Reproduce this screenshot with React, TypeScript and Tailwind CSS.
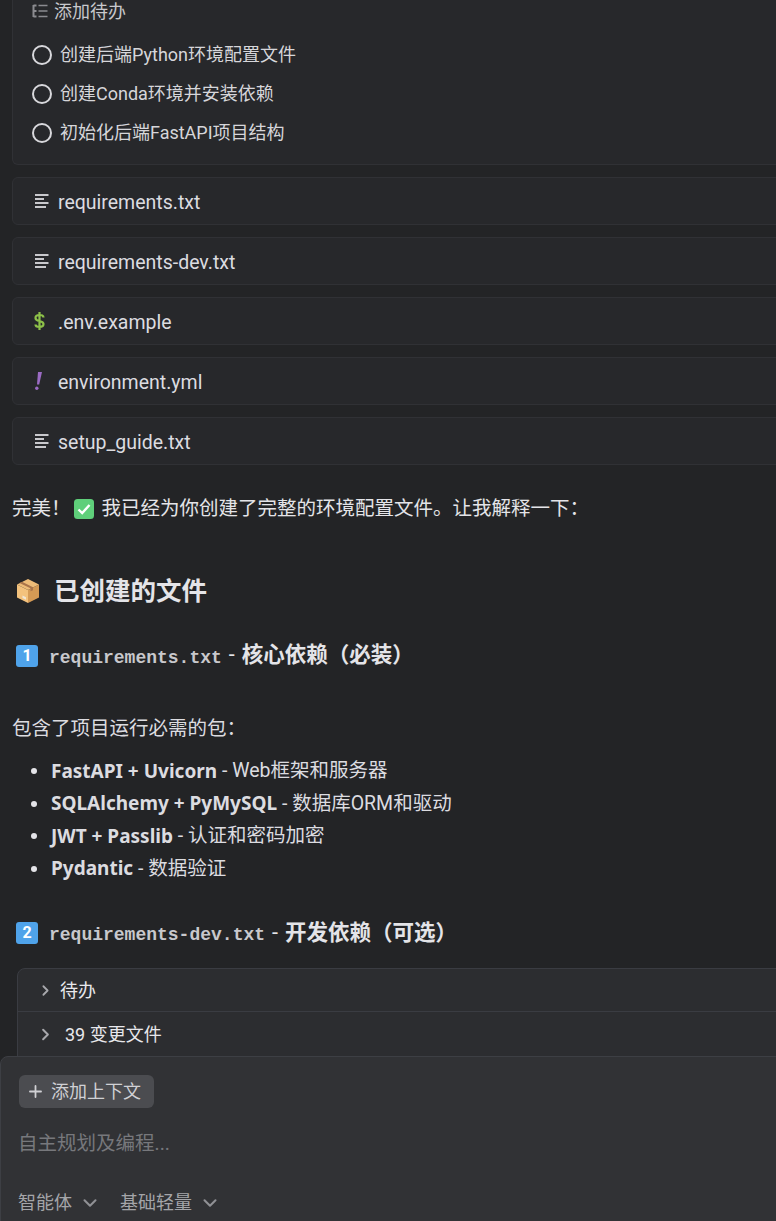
import { ChevronDown, ChevronRight, Plus } from "lucide-react";

const font = "font-['Roboto','Noto_Sans_CJK_SC',sans-serif]";

const LinesIcon = () => (
  <svg width="14" height="14" viewBox="0 0 14 14" className="text-[#c8c8cc]">
    <path d="M0 1h13.500M0 5h9M0 9h13.500M0 13h11" stroke="currentColor" strokeWidth="1.800" />
  </svg>
);

const DollarIcon = () => (
  <svg width="11" height="18" viewBox="0 0 11 18" className="-ml-[1px] text-[#8dc149]">
    <path
      d="M9.500 5.500C9.500 3.600 7.500 3 5.500 3 3.400 3 1.500 3.900 1.500 5.900 1.500 7.900 3.400 8.500 5.500 9c2.100.5 4 1.100 4 3.100 0 2-1.900 2.900-4 2.900-2 0-4-.6-4-2.500M5.500 0v18"
      stroke="currentColor"
      strokeWidth="2.200"
      fill="none"
    />
  </svg>
);

const BangIcon = () => (
  <svg width="7" height="18" viewBox="0 0 7 18" className="text-[#9b6bc4]">
    <path d="M3 0h4L4.200 12.500H2z" fill="currentColor" />
    <circle cx="1.800" cy="16.200" r="1.700" fill="currentColor" />
  </svg>
);

const TodoIcon = () => (
  <svg width="16" height="14" viewBox="0 0 16 14" className="text-[#8b8b90]">
    <path d="M1.500 1v12M1.500 1.500h3M1.500 7h3M1.500 12.500h3" stroke="currentColor" strokeWidth="2" fill="none" />
    <path d="M6.500 1.500h9M6.500 7h9M6.500 12.500h9" stroke="currentColor" strokeWidth="1.500" fill="none" />
  </svg>
);

const CheckEmoji = () => (
  <svg width="20" height="20" viewBox="0 0 20 20">
    <rect width="20" height="20" rx="3.500" fill="#5fcf7a" />
    <path d="M4.500 10.500l3.700 3.500 7.300-8" stroke="#fff" strokeWidth="2.400" fill="none" />
  </svg>
);

const BoxEmoji = () => (
  <svg width="24" height="26" viewBox="0 0 24 26">
    <path d="M1 6.500l11 5.500v13L1 19.500z" fill="#f3c27d" />
    <path d="M12 12l11-5.500v13L12 25z" fill="#d49a55" />
    <path d="M12 1l11 5.500L12 12 1 6.500z" fill="#eebc78" />
    <path d="M6 3.700l11 5.500v3l-2.500 1v-3L3.500 5z" fill="#a9744a" />
    <path d="M6.500 17.500l3.500 1.800v2.500l-3.500-1.800z" fill="#efe6d6" />
  </svg>
);

const KeyCap = ({ label }: { label: string }) => (
  <span className="flex h-[22px] w-[22px] items-center justify-center rounded-[3px] bg-[#4fa3ea] text-[16px] font-bold leading-none text-white">
    {label}
  </span>
);

const TodoRow = ({ text }: { text: string }) => (
  <div className="flex h-[39px] items-center gap-2 text-[18px] text-[#d6d6da]">
    <span className="h-5 w-5 rounded-full border-[2.500px] border-[#d8d8dc]" />
    <span>{text}</span>
  </div>
);

const FileCard = ({ icon, name }: { icon: React.ReactNode; name: string }) => (
  <div className="flex h-12 w-[800px] items-center rounded-md border border-[#303135] bg-[#27282b]">
    <span className="flex w-[45px] pl-[22px]">{icon}</span>
    <span className="pt-[4px] text-[19.500px] text-[#dcdce0]">{name}</span>
  </div>
);

const Bullet = ({ title, rest }: { title: string; rest: string }) => (
  <li className="flex h-[32.500px] items-center text-[19.500px] text-[#dcdce0]">
    <span className="mr-[14px] ml-[19px] h-[6px] w-[6px] rounded-full bg-[#e4e4e8]" />
    <span className="font-['Noto_Sans','Noto_Sans_CJK_SC',sans-serif] text-[19px] font-bold">{title}</span>
    <span>&nbsp;- {rest}</span>
  </li>
);

const App = () => {
  return (
    <div className={`relative h-[1221px] w-[776px] overflow-hidden bg-[#232426] ${font}`}>
      <div className="pl-3">
        <div className="-mt-[1px] h-[166px] w-[800px] rounded-b-md border border-t-0 border-[#303135] bg-[#27282b] pl-[19px]">
          <div className="flex h-[24px] items-center gap-[6px] text-[18px] text-[#c8c8cc]">
            <TodoIcon />
            <span>添加待办</span>
          </div>
          <div className="mt-[12px]">
            <TodoRow text="创建后端Python环境配置文件" />
            <TodoRow text="创建Conda环境并安装依赖" />
            <TodoRow text="初始化后端FastAPI项目结构" />
          </div>
        </div>
        <div className="mt-3 flex flex-col gap-3">
          <FileCard icon={<LinesIcon />} name="requirements.txt" />
          <FileCard icon={<LinesIcon />} name="requirements-dev.txt" />
          <FileCard icon={<DollarIcon />} name=".env.example" />
          <FileCard icon={<BangIcon />} name="environment.yml" />
          <FileCard icon={<LinesIcon />} name="setup_guide.txt" />
        </div>

        <p className="mt-[29px] flex items-center text-[19.500px] text-[#e4e4e8]">
          完美！
          <span className="ml-[3px] mr-[8px]"><CheckEmoji /></span>
          我已经为你创建了完整的环境配置文件。让我解释一下：
        </p>

        <h2 className="mt-[49px] flex items-center gap-[14px] pl-1 text-[25.500px] font-bold text-[#e4e4e8]">
          <BoxEmoji />
          已创建的文件
        </h2>

        <h3 className="mt-[29px] flex h-[32px] items-center pl-1 text-[21.500px] font-bold text-[#e4e4e8]">
          <KeyCap label="1" />
          <code className="ml-[11px] mt-[5px] font-['Liberation_Mono',monospace] text-[18px] text-[#c8c8cc]">requirements.txt</code>
          <span className="ml-[7px] font-normal">-</span>
          <span className="ml-[7px]">核心依赖（必装）</span>
        </h3>

        <p className="mt-[42px] text-[19.500px] text-[#dcdce0]">包含了项目运行必需的包：</p>

        <ul className="mt-[12px]">
          <Bullet title="FastAPI + Uvicorn" rest="Web框架和服务器" />
          <Bullet title="SQLAlchemy + PyMySQL" rest="数据库ORM和驱动" />
          <Bullet title="JWT + Passlib" rest="认证和密码加密" />
          <Bullet title="Pydantic" rest="数据验证" />
        </ul>

        <h3 className="mt-[32px] flex h-[32px] items-center pl-1 text-[21.500px] font-bold text-[#e4e4e8]">
          <KeyCap label="2" />
          <code className="ml-[11px] mt-[5px] font-['Liberation_Mono',monospace] text-[18px] text-[#c8c8cc]">requirements-dev.txt</code>
          <span className="ml-[7px] font-normal">-</span>
          <span className="ml-[7px]">开发依赖（可选）</span>
        </h3>
      </div>

      <div className="absolute left-[17px] top-[968px] w-[800px] rounded-t-lg border border-[#3a3c42] bg-[#2c2d30] text-[18px] text-[#e8e8ec]">
        <div className="flex h-[43px] items-center border-b border-[#3a3c42] pl-[19px]">
          <ChevronRight size={17} strokeWidth={2.5} className="text-[#a8a8ac]" />
          <span className="ml-[6px]">待办</span>
        </div>
        <div className="flex h-[44px] items-center pl-[18px]">
          <ChevronRight size={19} strokeWidth={2.5} className="text-[#a8a8ac]" />
          <span className="ml-[10px]">39 变更文件</span>
        </div>
      </div>

      <div className="absolute left-0 top-[1056px] h-[170px] w-[800px] rounded-tl-lg border border-[#3d3f44] bg-[#313235] pl-[18px]">
        <div className="mt-[18px] flex h-[33px] w-[135px] items-center rounded-md bg-[#4b4c50] pl-[7px] text-[18px] text-[#d0d0d4]">
          <Plus size={19} strokeWidth={2.25} className="text-[#d0d0d4]" />
          <span className="ml-[6px]">添加上下文</span>
        </div>
        <div className="-ml-[1px] mt-[21px] text-[19.500px] text-[#77787c]">自主规划及编程...</div>
        <div className="-ml-[1px] mt-[31px] flex items-center text-[18px] text-[#a4a5a9]">
          <span>智能体</span>
          <ChevronDown size={22} strokeWidth={2.25} className="ml-[7px] text-[#909195]" />
          <span className="ml-[19px]">基础轻量</span>
          <ChevronDown size={22} strokeWidth={2.25} className="ml-[7px] text-[#909195]" />
        </div>
      </div>
    </div>
  );
};

export default App;
